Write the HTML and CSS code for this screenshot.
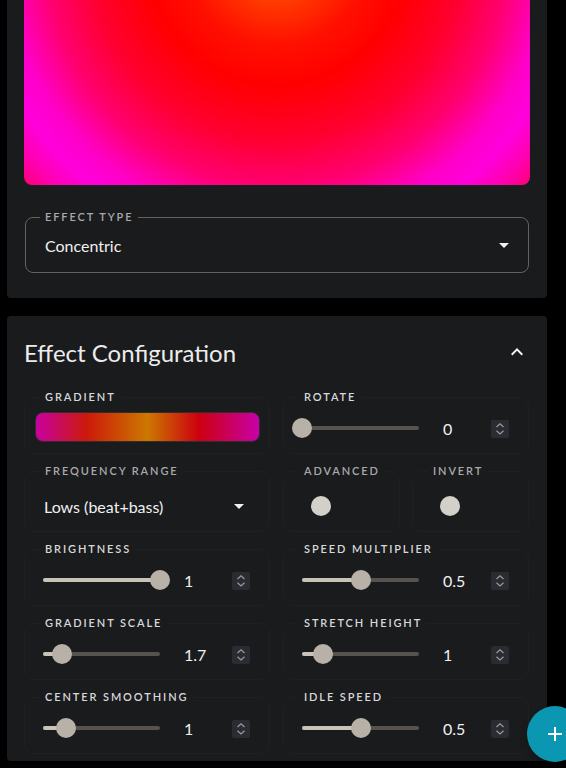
FILE: index.html
```html
<!DOCTYPE html>
<html lang="en">
<head>
<meta charset="utf-8">
<title>Effect</title>
<link rel="stylesheet" href="styles.css">
</head>
<body>
<div class="page">
  <section class="card card-preview">
    <div class="visualizer"></div>
    <fieldset class="outlined select-field">
      <legend class="dim">Effect Type</legend>
      <div class="select-row">
        <span class="select-value">Concentric</span>
        <svg class="caret" viewBox="0 0 24 24" width="24" height="24"><path d="M7 10l5 5 5-5z"/></svg>
      </div>
    </fieldset>
  </section>

  <section class="card card-config">
    <header class="card-head">
      <h2 class="card-title">Effect Configuration</h2>
      <svg class="chevron" viewBox="0 0 24 24" width="24" height="24"><path d="M12 8l-6 6 1.41 1.41L12 10.83l4.59 4.58L18 14z"/></svg>
    </header>

    <div class="grid">
      <fieldset class="outlined ctl">
        <legend>Gradient</legend>
        <div class="gradient-bar"></div>
      </fieldset>

      <fieldset class="outlined ctl">
        <legend>Rotate</legend>
        <div class="slider-row">
          <div class="slider"><div class="fill" style="width:0%"></div><div class="thumb" style="left:0%"></div></div>
          <span class="value">0</span>
          <span class="spin"><svg viewBox="0 0 18 18" width="18" height="18"><path d="M5.5 7L9 3.8 12.5 7M5.5 10.8L9 14 12.5 10.8"/></svg></span>
        </div>
      </fieldset>

      <fieldset class="outlined ctl tall">
        <legend class="dim">Frequency Range</legend>
        <div class="select-row freq-row">
          <span class="select-value">Lows (beat+bass)</span>
          <svg class="caret" viewBox="0 0 24 24" width="24" height="24"><path d="M7 10l5 5 5-5z"/></svg>
        </div>
      </fieldset>

      <div class="switch-pair">
        <fieldset class="outlined ctl tall">
          <legend class="dim">Advanced</legend>
          <div class="switch-row"><span class="switch-thumb"></span></div>
        </fieldset>
        <fieldset class="outlined ctl tall">
          <legend class="dim">Invert</legend>
          <div class="switch-row"><span class="switch-thumb"></span></div>
        </fieldset>
      </div>

      <fieldset class="outlined ctl">
        <legend>Brightness</legend>
        <div class="slider-row">
          <div class="slider"><div class="fill" style="width:100%"></div><div class="thumb" style="left:100%"></div></div>
          <span class="value">1</span>
          <span class="spin"><svg viewBox="0 0 18 18" width="18" height="18"><path d="M5.5 7L9 3.8 12.5 7M5.5 10.8L9 14 12.5 10.8"/></svg></span>
        </div>
      </fieldset>

      <fieldset class="outlined ctl">
        <legend>Speed Multiplier</legend>
        <div class="slider-row">
          <div class="slider"><div class="fill" style="width:50%"></div><div class="thumb" style="left:50%"></div></div>
          <span class="value">0.5</span>
          <span class="spin"><svg viewBox="0 0 18 18" width="18" height="18"><path d="M5.5 7L9 3.8 12.5 7M5.5 10.8L9 14 12.5 10.8"/></svg></span>
        </div>
      </fieldset>

      <fieldset class="outlined ctl">
        <legend>Gradient Scale</legend>
        <div class="slider-row">
          <div class="slider"><div class="fill" style="width:16%"></div><div class="thumb" style="left:16%"></div></div>
          <span class="value">1.7</span>
          <span class="spin"><svg viewBox="0 0 18 18" width="18" height="18"><path d="M5.5 7L9 3.8 12.5 7M5.5 10.8L9 14 12.5 10.8"/></svg></span>
        </div>
      </fieldset>

      <fieldset class="outlined ctl">
        <legend>Stretch Height</legend>
        <div class="slider-row">
          <div class="slider"><div class="fill" style="width:18%"></div><div class="thumb" style="left:18%"></div></div>
          <span class="value">1</span>
          <span class="spin"><svg viewBox="0 0 18 18" width="18" height="18"><path d="M5.5 7L9 3.8 12.5 7M5.5 10.8L9 14 12.5 10.8"/></svg></span>
        </div>
      </fieldset>

      <fieldset class="outlined ctl">
        <legend>Center Smoothing</legend>
        <div class="slider-row">
          <div class="slider"><div class="fill" style="width:20%"></div><div class="thumb" style="left:20%"></div></div>
          <span class="value">1</span>
          <span class="spin"><svg viewBox="0 0 18 18" width="18" height="18"><path d="M5.5 7L9 3.8 12.5 7M5.5 10.8L9 14 12.5 10.8"/></svg></span>
        </div>
      </fieldset>

      <fieldset class="outlined ctl">
        <legend>Idle Speed</legend>
        <div class="slider-row">
          <div class="slider"><div class="fill" style="width:50%"></div><div class="thumb" style="left:50%"></div></div>
          <span class="value">0.5</span>
          <span class="spin"><svg viewBox="0 0 18 18" width="18" height="18"><path d="M5.5 7L9 3.8 12.5 7M5.5 10.8L9 14 12.5 10.8"/></svg></span>
        </div>
      </fieldset>
    </div>
  </section>
</div>

<button class="fab" type="button" aria-label="Add">
  <svg viewBox="0 0 24 24" width="24" height="24"><path d="M19 13h-6v6h-2v-6H5v-2h6V5h2v6h6v2z"/></svg>
</button>
</body>
</html>
```

FILE: styles.css
```css
* { box-sizing: border-box; }

html, body {
  margin: 0;
  padding: 0;
  background: #000;
}

body {
  width: 566px;
  height: 768px;
  overflow: hidden;
  font-family: Lato, "Open Sans", sans-serif;
  color: #ececec;
}

.page {
  display: flex;
  flex-direction: column;
  gap: 18px;
  padding: 0 19px 0 7px;
}

.card {
  background: #1a1b1d;
  border-radius: 4px;
}

.card-preview {
  border-radius: 0 0 4px 4px;
  padding: 0 17px 25px;
}

.visualizer {
  height: 185px;
  border-radius: 0 0 8px 8px;
  background: radial-gradient(circle at 50% -45px,
    #ff6400 0,
    #ff3c00 45px,
    #ff1000 90px,
    #ff0000 130px,
    #ff0030 185px,
    #ff0070 230px,
    #ff00c8 270px,
    #ff00dc 295px,
    #ff00b0 320px,
    #ff0060 350px,
    #ff2030 380px);
}

.outlined {
  margin: 0;
  padding: 0;
  min-width: 0;
  border: 1px solid #1f2023;
  border-radius: 10px;
}

legend {
  margin-left: 15px;
  padding: 0 5px;
  font-size: 11px;
  line-height: 14px;
  font-weight: 600;
  letter-spacing: 1.9px;
  text-transform: uppercase;
  color: #d8d8da;
}

legend.dim { color: #a9a9ad; }

.select-field {
  margin: 25px 1px 0;
  height: 63px;
  border-color: #67615b;
  border-radius: 8px;
}

.select-field legend { margin-left: 14px; }

.select-row {
  display: flex;
  align-items: center;
  justify-content: space-between;
  height: 20px;
  margin-top: 11px;
  padding: 0 12px 0 19px;
}

.select-value {
  font-size: 16px;
  color: #f0f0f0;
}

.caret { fill: #f0f0f0; display: block; }

.card-config {
  padding: 20px 18px 7px 17px;
}

.card-head {
  display: flex;
  align-items: center;
  justify-content: space-between;
  height: 32px;
  margin-bottom: 22px;
}

.card-title {
  margin: 0;
  font-size: 24px;
  font-weight: 400;
  color: #ececec;
}

.chevron { fill: #f4f4f4; display: block; }

.grid {
  display: grid;
  grid-template-columns: 1fr 1fr;
  column-gap: 13px;
  row-gap: 10px;
}

.ctl { height: 64px; }
.ctl.tall { height: 68px; }

.gradient-bar {
  width: 225px;
  height: 30px;
  margin: 8px 0 0 10px;
  border-radius: 8px;
  border: 1px solid #2e2e30;
  background: linear-gradient(90deg,
    #c8009e 0%,
    #cc1a0a 23%,
    #cc7800 50%,
    #cc0010 73%,
    #c800a8 100%);
}

.slider-row {
  display: flex;
  align-items: center;
  height: 20px;
  margin-top: 14px;
  padding-left: 18px;
}

.slider {
  position: relative;
  width: 117px;
  height: 4px;
  border-radius: 2px;
  background: #56534f;
}

.slider .fill {
  position: absolute;
  left: 0;
  top: 0;
  bottom: 0;
  border-radius: 2px;
  background: #c9c3ba;
}

.slider .thumb {
  position: absolute;
  top: 50%;
  width: 20px;
  height: 20px;
  margin: -10px 0 0 -10px;
  border-radius: 50%;
  background: #b8b1a8;
}

.value {
  width: 48px;
  margin-left: 24px;
  font-size: 16px;
  color: #f0f0f0;
}

.spin {
  display: block;
  width: 18px;
  height: 18px;
  margin-top: 2px;
  border-radius: 2px;
  background: #2b2b32;
}

.spin svg {
  display: block;
  fill: none;
  stroke: #9a9aa2;
  stroke-width: 1.2;
}

.freq-row {
  margin-top: 18px;
  padding: 0 18px 0 19px;
}

.switch-pair {
  display: grid;
  grid-template-columns: 1fr 1fr;
  column-gap: 12px;
}

.switch-row {
  display: flex;
  align-items: center;
  height: 20px;
  margin-top: 18px;
  padding-left: 27px;
}

.switch-thumb {
  width: 20px;
  height: 20px;
  border-radius: 50%;
  background: #d3d0ca;
}

.fab {
  position: fixed;
  left: 527px;
  top: 706px;
  width: 56px;
  height: 56px;
  padding: 0;
  border: none;
  border-radius: 50%;
  background: #0b97b1;
  display: flex;
  align-items: center;
  justify-content: center;
  box-shadow: 0 3px 5px -1px rgba(0,0,0,.2), 0 6px 10px 0 rgba(0,0,0,.14);
}

.fab svg { fill: #ffffff; display: block; }
```
